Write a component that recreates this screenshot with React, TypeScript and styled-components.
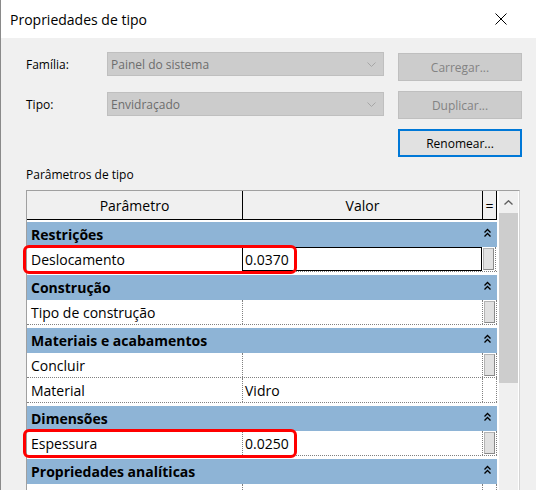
import styled, { createGlobalStyle } from 'styled-components';

interface ParamRow {
  name: string;
  value: string;
  editing?: boolean;
  marked?: boolean;
  hasButton?: boolean;
}

interface ParamGroup {
  title: string;
  rows: ParamRow[];
}

const groups: ParamGroup[] = [
  {
    title: 'Restrições',
    rows: [{ name: 'Deslocamento', value: '0.0370', editing: true, marked: true, hasButton: true }],
  },
  {
    title: 'Construção',
    rows: [{ name: 'Tipo de construção', value: '', hasButton: true }],
  },
  {
    title: 'Materiais e acabamentos',
    rows: [
      { name: 'Concluir', value: '', hasButton: true },
      { name: 'Material', value: 'Vidro' },
    ],
  },
  {
    title: 'Dimensões',
    rows: [{ name: 'Espessura', value: '0.0250', marked: true, hasButton: true }],
  },
  {
    title: 'Propriedades analíticas',
    rows: [{ name: '', value: '' }],
  },
];

const CollapseIcon = () => (
  <svg width="7" height="9" viewBox="0 0 7 9">
    <path d="M0.5 4.5 L3.5 1.5 L6.5 4.5 M0.5 8.5 L3.5 5.5 L6.5 8.5" stroke="#000" strokeWidth="1.3" fill="none" />
  </svg>
);

export default function App() {
  return (
    <>
      <GlobalStyle />
      <Window>
        <TitleBar>
          <Title>Propriedades de tipo</Title>
          <svg width="12" height="12" viewBox="0 0 12 12">
            <path d="M0.5 0.5 L11.5 11.5 M11.5 0.5 L0.5 11.5" stroke="#000" strokeWidth="1" />
          </svg>
        </TitleBar>
        <Body>
          <TopArea>
            <Fields>
              <FieldRow>
                <FieldLabel>Família:</FieldLabel>
                <Combo>
                  <ComboText>Painel do sistema</ComboText>
                  <svg width="9" height="5" viewBox="0 0 9 5">
                    <path d="M0.5 0.5 L4.5 4.5 L8.5 0.5" stroke="#a6a6a6" fill="none" />
                  </svg>
                </Combo>
              </FieldRow>
              <FieldRow>
                <FieldLabel>Tipo:</FieldLabel>
                <Combo>
                  <ComboText>Envidraçado</ComboText>
                  <svg width="9" height="5" viewBox="0 0 9 5">
                    <path d="M0.5 0.5 L4.5 4.5 L8.5 0.5" stroke="#a6a6a6" fill="none" />
                  </svg>
                </Combo>
              </FieldRow>
            </Fields>
            <ButtonStack>
              <DialogButton $focused={false}>Carregar...</DialogButton>
              <DialogButton $focused={false}>Duplicar...</DialogButton>
              <DialogButton $focused>Renomear...</DialogButton>
            </ButtonStack>
          </TopArea>

          <SectionLabel>Parâmetros de tipo</SectionLabel>

          <GridFrame>
            <Table>
              <HeaderRow>
                <HeaderCell $width={216}>Parâmetro</HeaderCell>
                <HeaderCell $width={240}>Valor</HeaderCell>
                <HeaderCell $width={14}>=</HeaderCell>
              </HeaderRow>
              {groups.map((group, gi) => (
                <div key={group.title}>
                  <GroupRow $first={gi === 0}>
                    <span>{group.title}</span>
                    <IconWrap>
                      <CollapseIcon />
                    </IconWrap>
                  </GroupRow>
                  {group.rows.map((row, ri) => (
                    <DataRow key={ri}>
                      <NameCell>{row.name}</NameCell>
                      <ValueCell $editing={!!row.editing}>{row.value}</ValueCell>
                      <ButtonCell>{row.hasButton && <EditButton />}</ButtonCell>
                      {row.marked && <Highlight />}
                    </DataRow>
                  ))}
                </div>
              ))}
            </Table>
            <ScrollBar>
              <ScrollUp>
                <svg width="9" height="5" viewBox="0 0 9 5">
                  <path d="M0.5 4.5 L4.5 0.8 L8.5 4.5" stroke="#606060" strokeWidth="1.4" fill="none" />
                </svg>
              </ScrollUp>
              <ScrollThumb />
            </ScrollBar>
          </GridFrame>
        </Body>
      </Window>
    </>
  );
}

const GlobalStyle = createGlobalStyle`
  html, body {
    margin: 0;
    padding: 0;
    background: #ffffff;
  }
  body {
    font-family: "Open Sans", "Liberation Sans", sans-serif;
    color: #000;
  }
`;

const Window = styled.div`
  display: flex;
  flex-direction: column;
  width: 536px;
  height: 490px;
  box-sizing: border-box;
  border-left: 1px solid #8a8a8a;
  overflow: hidden;
`;

const TitleBar = styled.div`
  display: flex;
  align-items: center;
  justify-content: space-between;
  flex: 0 0 38px;
  padding: 0 29px 0 9px;
  background: #ffffff;
`;

const Title = styled.div`
  font-size: 14px;
  line-height: 19px;
  margin-top: 1px;
`;

const Body = styled.div`
  flex: 1;
  display: flex;
  flex-direction: column;
  align-items: flex-start;
  padding: 14px 0 0 25px;
  background: #f0f0f0;
`;

const TopArea = styled.div`
  display: flex;
  align-items: flex-start;
`;

const Fields = styled.div`
  display: flex;
  flex-direction: column;
  gap: 16px;
`;

const FieldRow = styled.div`
  display: flex;
  align-items: center;
  height: 24px;
`;

const FieldLabel = styled.div`
  width: 81px;
  font-size: 12px;
`;

const Combo = styled.div`
  display: flex;
  align-items: center;
  justify-content: space-between;
  width: 277px;
  height: 24px;
  box-sizing: border-box;
  padding: 0 7px 0 3px;
  background: #cccccc;
  border: 1px solid #bfbfbf;
`;

const ComboText = styled.span`
  font-size: 12px;
  color: #6d6d6d;
`;

const ButtonStack = styled.div`
  display: flex;
  flex-direction: column;
  gap: 10px;
  margin: 1px 0 0 14px;
`;

const DialogButton = styled.div<{ $focused: boolean }>`
  display: flex;
  align-items: center;
  justify-content: center;
  width: 124px;
  height: 28px;
  box-sizing: border-box;
  font-size: 12px;
  background: ${({ $focused }) => ($focused ? '#e1e1e1' : '#cccccc')};
  border: ${({ $focused }) => ($focused ? '2px solid #0078d7' : '1px solid #bfbfbf')};
  color: ${({ $focused }) => ($focused ? '#000000' : '#838383')};
`;

const SectionLabel = styled.div`
  margin-top: 10px;
  font-size: 12px;
  line-height: 16px;
`;

const GridFrame = styled.div`
  display: flex;
  margin-top: 7px;
  border: 1px solid #a0a0a0;
  border-right-color: #d4d4d4;
  background: #ffffff;
`;

const Table = styled.div`
  display: flex;
  flex-direction: column;
  width: 470px;
  font-size: 14px;
`;

const HeaderRow = styled.div`
  display: flex;
  height: 29px;
  box-sizing: border-box;
  border-bottom: 1px solid #000;
  background: #f0f0f0;
`;

const HeaderCell = styled.div<{ $width: number }>`
  display: flex;
  align-items: center;
  justify-content: center;
  width: ${({ $width }) => $width}px;
  box-sizing: border-box;
  border-right: 1px solid #000;
`;

const GroupRow = styled.div<{ $first: boolean }>`
  display: flex;
  align-items: center;
  justify-content: space-between;
  height: 25px;
  margin-top: ${({ $first }) => ($first ? 2 : 3)}px;
  padding: 0 6px 0 4px;
  background: #8eb4d6;
  font-weight: 700;
`;

const IconWrap = styled.div`
  display: flex;
  margin-bottom: 4px;
`;

const DataRow = styled.div`
  position: relative;
  display: flex;
  height: 25px;
  box-sizing: border-box;
  border-bottom: 1px dotted #808080;
`;

const NameCell = styled.div`
  display: flex;
  align-items: center;
  width: 216px;
  box-sizing: border-box;
  padding-left: 4px;
  border-right: 1px dotted #808080;
`;

const ValueCell = styled.div<{ $editing: boolean }>`
  display: flex;
  align-items: center;
  box-sizing: border-box;
  width: ${({ $editing }) => ($editing ? 240 : 240)}px;
  margin-left: ${({ $editing }) => ($editing ? -1 : 0)}px;
  padding-left: 2px;
  border: ${({ $editing }) => ($editing ? '1px solid #000' : 'none')};
  border-right: ${({ $editing }) => ($editing ? '1px solid #000' : '1px dotted #808080')};
`;

const ButtonCell = styled.div`
  display: flex;
  width: 14px;
  box-sizing: border-box;
  padding: 1px 1px 1px 1px;
  border-right: 1px dotted #808080;
`;

const EditButton = styled.div`
  flex: 1;
  box-sizing: border-box;
  background: #e1e1e1;
  border: 1px solid #b4b4b4;
  border-right-color: #8a8a8a;
  border-bottom-color: #8a8a8a;
`;

const Highlight = styled.div`
  position: absolute;
  left: -4px;
  top: -2px;
  width: 274px;
  height: 29px;
  box-sizing: border-box;
  border: 3px solid #ff0000;
  border-radius: 6px;
  pointer-events: none;
`;

const ScrollBar = styled.div`
  display: flex;
  flex-direction: column;
  width: 19px;
  margin: 0 1px 0 2px;
  background: #f0f0f0;
`;

const ScrollUp = styled.div`
  display: flex;
  align-items: center;
  justify-content: center;
  height: 22px;
`;

const ScrollThumb = styled.div`
  height: 170px;
  background: #cdcdcd;
`;
